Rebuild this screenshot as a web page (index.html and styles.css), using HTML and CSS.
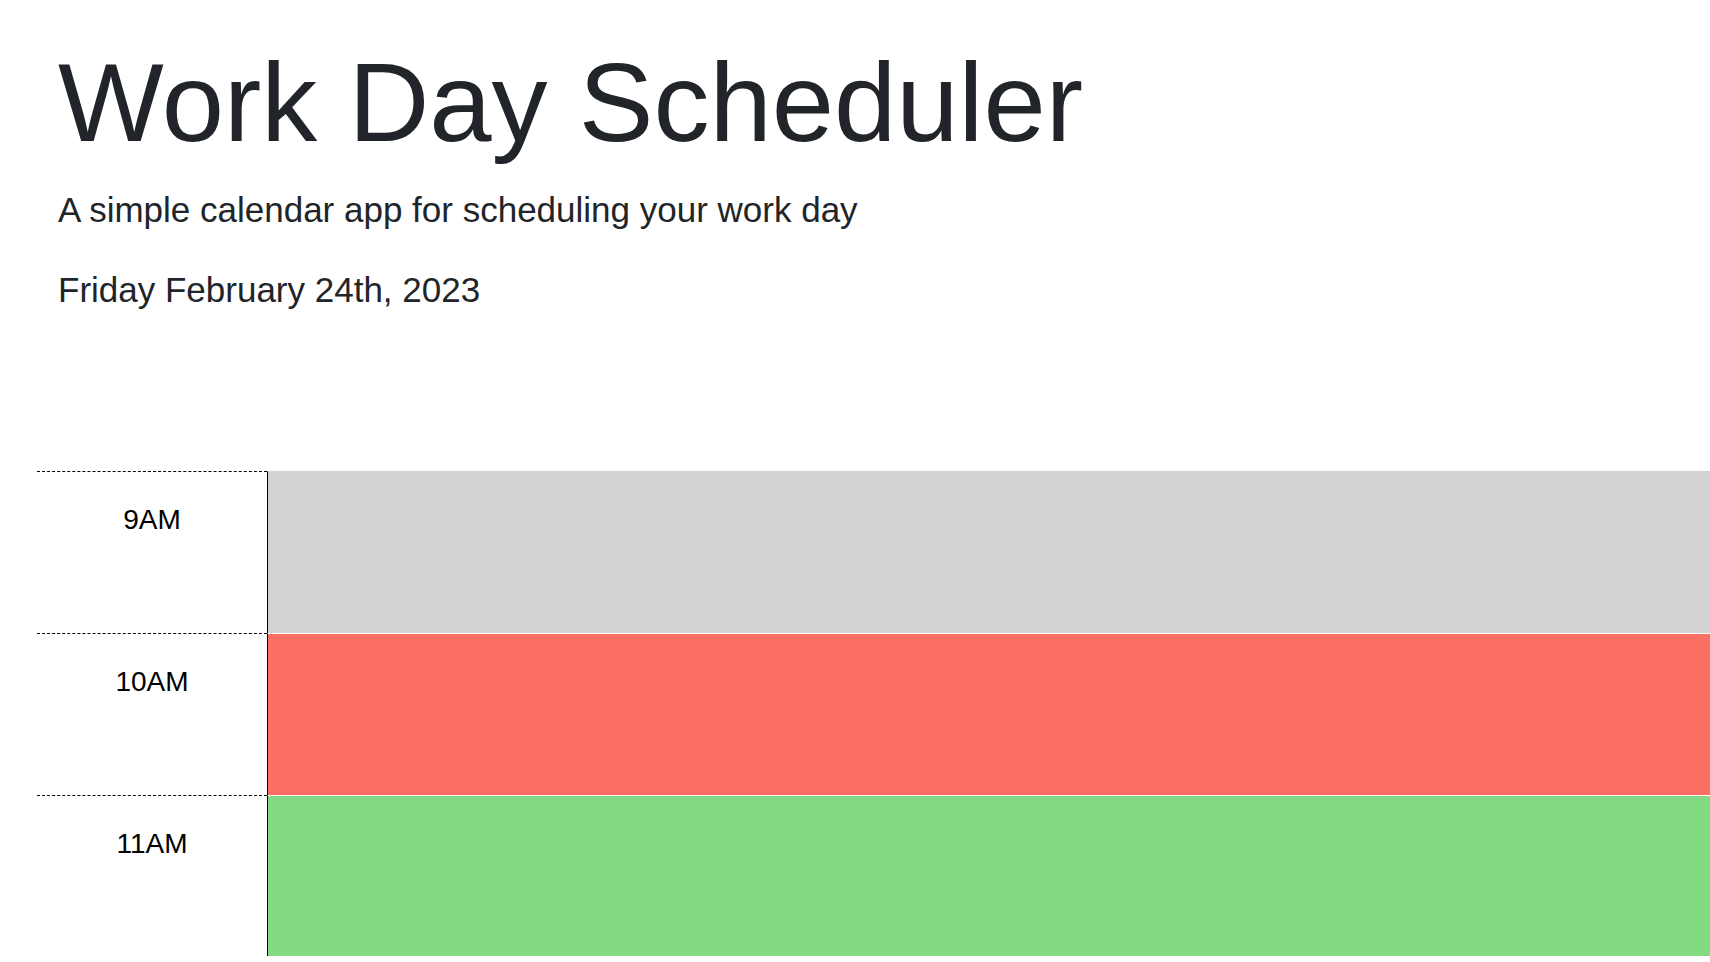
FILE: index.html
```html
<!DOCTYPE html>
<html lang="en">
<head>
<meta charset="utf-8">
<title>Work Day Scheduler</title>
<link rel="stylesheet" href="styles.css">
</head>
<body>
  <header class="jumbotron">
    <h1 class="title">Work Day Scheduler</h1>
    <p class="lead">A simple calendar app for scheduling your work day</p>
    <p class="lead current-day">Friday February 24th, 2023</p>
  </header>
  <main class="schedule">
    <div class="time-block">
      <div class="hour">9AM</div>
      <textarea class="description past"></textarea>
    </div>
    <div class="time-block">
      <div class="hour">10AM</div>
      <textarea class="description present"></textarea>
    </div>
    <div class="time-block">
      <div class="hour">11AM</div>
      <textarea class="description future"></textarea>
    </div>
  </main>
</body>
</html>
```
FILE: styles.css
```css
html, body {
  margin: 0;
  padding: 0;
  background: #ffffff;
}

body {
  font-family: "Liberation Sans", Arial, sans-serif;
  color: #212529;
  overflow: hidden;
}

.jumbotron {
  padding: 36px 58px 0 58px;
}

.title {
  margin: 0 0 14px 0;
  font-size: 112px;
  font-weight: 400;
  line-height: 1.2;
  color: #212529;
}

.lead {
  margin: 0 0 27px 0;
  font-size: 35px;
  font-weight: 400;
  line-height: 1.5;
}

.current-day {
  margin-bottom: 0;
}

.schedule {
  margin: 155px 0 0 37px;
  display: flex;
  flex-direction: column;
}

.time-block {
  display: grid;
  grid-template-columns: 230px 1fr;
  height: 161.7px;
}

.hour {
  box-sizing: border-box;
  border-top: 1px dashed #000000;
  padding-top: 27px;
  font-size: 28px;
  line-height: 1.5;
  text-align: center;
  color: #000000;
}

.description {
  box-sizing: border-box;
  display: block;
  width: 100%;
  height: 100%;
  margin: 0;
  padding: 10px;
  border: none;
  border-top: 1px solid #ffffff;
  border-left: 1px solid #000000;
  resize: none;
  font-family: "Liberation Sans", Arial, sans-serif;
  font-size: 28px;
  color: #000000;
  outline: none;
}

.time-block:first-child .description {
  border-top-color: #d3d3d3;
}

.past {
  background-color: #d3d3d3;
}

.present {
  background-color: #fb6f64;
}

.future {
  background-color: #82db82;
}
```
